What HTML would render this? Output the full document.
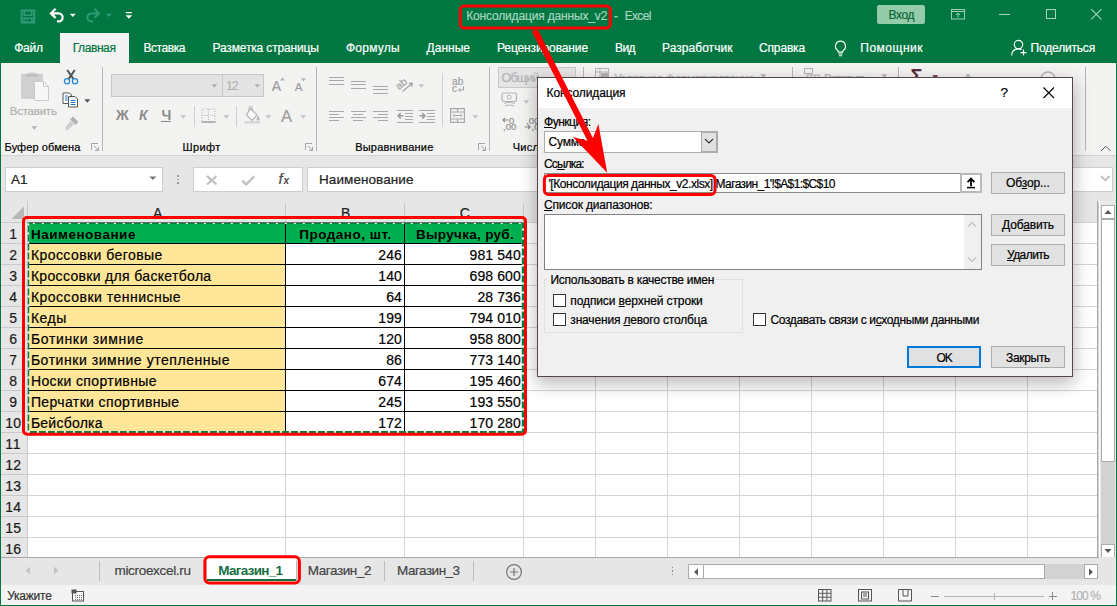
<!DOCTYPE html>
<html lang="ru"><head><meta charset="utf-8"><title>Excel</title>
<style>
html,body{margin:0;padding:0}
body{width:1117px;height:606px;position:relative;overflow:hidden;background:#007641;font-family:"Liberation Sans",sans-serif}
.b{position:absolute;display:block}
.t{position:absolute;white-space:pre;line-height:1;font-family:"Liberation Sans",sans-serif;-webkit-text-stroke:0.2px currentColor}
.t u{text-decoration:underline;text-underline-offset:1px}
</style></head>
<body>
<!-- title bar and ribbon tabs -->
<div class="b" style="left:0px;top:0px;width:1117px;height:63px;background:#007641;"></div>
<div class="b" style="left:60px;top:33px;width:69px;height:31px;background:#f3f3f3;"></div>
<svg class="b" style="left:20px;top:9px;" width="16" height="15" viewBox="0 0 16 15"><path d="M1.6 1.6h12.6v11.8H1.6z" fill="none" stroke="#2f9a76" stroke-width="2"/><path d="M4.2 1.6v4.6h7.4V1.6" fill="none" stroke="#2f9a76" stroke-width="1.6"/><path d="M4 13.4V9.4h8v4M7 13.4v-2.2" fill="none" stroke="#2f9a76" stroke-width="1.6"/></svg>
<svg class="b" style="left:48px;top:7px;" width="18" height="16" viewBox="0 0 18 16"><path d="M3.4 6.4H10.6a4 4 0 0 1 0 8H9" fill="none" stroke="#fff" stroke-width="2.3"/><path d="M7.6 1.8L3 6.4L7.6 10.8" fill="none" stroke="#fff" stroke-width="2.3"/></svg>
<svg class="b" style="left:69px;top:13px;" width="8" height="5" viewBox="0 0 8 5"><path d="M0.8 0.8h6l-3 3.2z" fill="#fff"/></svg>
<svg class="b" style="left:84px;top:7px;" width="18" height="16" viewBox="0 0 18 16"><path d="M14.6 6.4H7.4a4 4 0 0 0 0 8H9" fill="none" stroke="#2f9a76" stroke-width="2"/><path d="M10.4 1.8L15 6.4L10.4 10.8" fill="none" stroke="#2f9a76" stroke-width="2"/></svg>
<svg class="b" style="left:105px;top:13px;" width="8" height="5" viewBox="0 0 8 5"><path d="M0.8 0.8h6l-3 3.2z" fill="#2f9a76"/></svg>
<svg class="b" style="left:125px;top:11px;" width="8" height="9" viewBox="0 0 8 9"><rect x="0.8" y="1" width="6" height="1.3" fill="#fff"/><path d="M0.6 4.3h6.6l-3.3 3.4z" fill="#fff"/></svg>
<span class="t" style="left:466.20px;top:10px;font-size:12px;color:#a9d5bf;letter-spacing:-0.161px;">Консолидация данных_v2</span>
<span class="t" style="left:614.00px;top:10px;font-size:12px;color:#a9d5bf;">-</span>
<span class="t" style="left:624.70px;top:10px;font-size:12px;color:#a9d5bf;letter-spacing:-0.669px;">Excel</span>
<div class="b" style="left:877px;top:5px;width:48px;height:19px;background:#93cbab;border-radius:2px;"></div>
<span class="t" style="left:888.60px;top:9px;font-size:12px;color:#0b6638;letter-spacing:-0.389px;">Вход</span>
<svg class="b" style="left:950px;top:8px;" width="16" height="12" viewBox="0 0 16 12"><rect x="1.5" y="1.5" width="13" height="9.5" fill="none" stroke="#9ccfb5" stroke-width="1"/><path d="M1.5 3.5h13" stroke="#9ccfb5"/><path d="M8 9.5V5.2M6 7L8 5l2 2" fill="none" stroke="#9ccfb5" stroke-width="1"/></svg>
<div class="b" style="left:999px;top:14px;width:10.5px;height:1px;background:#a8d4be;"></div>
<div class="b" style="left:1045.5px;top:9px;width:10px;height:10px;border:1px solid #a8d4be;box-sizing:border-box;"></div>
<svg class="b" style="left:1090px;top:8px;" width="13" height="13" viewBox="0 0 13 13"><path d="M1.2 1.2L11.4 11.4M11.4 1.2L1.2 11.4" stroke="#a8d4be" stroke-width="1.1" fill="none"/></svg>
<span class="t" style="left:14.30px;top:42px;font-size:12px;color:#fff;letter-spacing:-0.304px;">Файл</span>
<span class="t" style="left:72.70px;top:42px;font-size:12px;color:#007641;letter-spacing:-0.413px;">Главная</span>
<span class="t" style="left:143.40px;top:42px;font-size:12px;color:#fff;letter-spacing:-0.430px;">Вставка</span>
<span class="t" style="left:212.50px;top:42px;font-size:12px;color:#fff;letter-spacing:-0.151px;">Разметка страницы</span>
<span class="t" style="left:346.00px;top:42px;font-size:12px;color:#fff;letter-spacing:0.226px;">Формулы</span>
<span class="t" style="left:426.60px;top:42px;font-size:12px;color:#fff;letter-spacing:0.007px;">Данные</span>
<span class="t" style="left:497.00px;top:42px;font-size:12px;color:#fff;letter-spacing:-0.119px;">Рецензирование</span>
<span class="t" style="left:615.00px;top:42px;font-size:12px;color:#fff;letter-spacing:-0.573px;">Вид</span>
<span class="t" style="left:662.00px;top:42px;font-size:12px;color:#fff;letter-spacing:0.047px;">Разработчик</span>
<span class="t" style="left:759.00px;top:42px;font-size:12px;color:#fff;letter-spacing:-0.154px;">Справка</span>
<span class="t" style="left:860.30px;top:42px;font-size:12px;color:#fff;letter-spacing:0.502px;">Помощник</span>
<span class="t" style="left:1030.60px;top:42px;font-size:12px;color:#fff;letter-spacing:-0.187px;">Поделиться</span>
<svg class="b" style="left:833px;top:40px;" width="15" height="17" viewBox="0 0 15 17"><path d="M7.5 1.2a5 5 0 0 0-3 9c.7.6 1 1.2 1 2h4c0-.8.3-1.4 1-2a5 5 0 0 0-3-9z" fill="none" stroke="#fff" stroke-width="1.2"/><path d="M5.5 14h4M6 15.8h3" stroke="#fff" stroke-width="1.1"/></svg>
<svg class="b" style="left:1010px;top:39px;" width="18" height="18" viewBox="0 0 18 18"><circle cx="8.5" cy="5.6" r="4.2" fill="none" stroke="#fff" stroke-width="1.2"/><path d="M1.6 16.5c.2-4 2.6-6.6 6.9-6.6 1.3 0 2.3.3 3.2.8" fill="none" stroke="#fff" stroke-width="1.2"/><path d="M13.5 10.6v6M10.5 13.6h6" stroke="#fff" stroke-width="1.2"/></svg>
<!-- ribbon and formula bar -->
<div class="b" style="left:1px;top:63px;width:1115px;height:92px;background:#f3f3f2;"></div>
<div class="b" style="left:1px;top:155px;width:1115px;height:1px;background:#d2d2d2;"></div>
<div class="b" style="left:1px;top:156px;width:1115px;height:45px;background:#e6e6e6;"></div>
<svg class="b" style="left:20px;top:69px;" width="31" height="33" viewBox="0 0 31 33"><rect x="1" y="5" width="22" height="25" fill="#d0d0d0"/><path d="M6 8V4.5h3.5a2.6 2.6 0 0 1 5 0H18V8z" fill="#c2c2c2"/><circle cx="12" cy="3.6" r="1" fill="#f3f3f3"/><path d="M14.5 12.5h9l5 5v14h-14z" fill="#f7f7f7" stroke="#c9c9c9" stroke-width="1"/><path d="M23.5 12.5v5h5" fill="none" stroke="#c9c9c9"/></svg>
<span class="t" style="left:9.70px;top:106px;font-size:11.5px;color:#b0b0b0;letter-spacing:-0.219px;">Вставить</span>
<svg class="b" style="left:30.5px;top:126px;" width="7" height="4.4" viewBox="0 0 7 4.4"><path d="M0.3 0.3h6l-3.0 3.4z" fill="#b3b3b3"/></svg>
<svg class="b" style="left:63px;top:69px;" width="16" height="16" viewBox="0 0 16 16"><path d="M4.2 1L10.4 9.8M11.8 1L5.6 9.8" stroke="#555" stroke-width="2" fill="none"/><circle cx="4" cy="12.2" r="2.6" fill="none" stroke="#1b86d8" stroke-width="1.2"/><circle cx="12" cy="12.2" r="2.6" fill="none" stroke="#1b86d8" stroke-width="1.2"/></svg>
<svg class="b" style="left:62px;top:92px;" width="17" height="16" viewBox="0 0 17 16"><path d="M1 1h6.5l2 2v8.5h-8.5z" fill="#fff" stroke="#555" stroke-width="1"/><path d="M6.5 4.5h6.5l2.5 2.5v8h-9z" fill="#fff" stroke="#555" stroke-width="1"/><path d="M8.5 8.5h5M8.5 10.5h5M8.5 12.5h5" stroke="#1e73c8" stroke-width="1"/><path d="M3 4h2.5M3 6h2.5M3 8h2.5" stroke="#1e73c8" stroke-width="1"/></svg>
<svg class="b" style="left:84px;top:99px;" width="7" height="4.4" viewBox="0 0 7 4.4"><path d="M0.3 0.3h6l-3.0 3.4z" fill="#555"/></svg>
<svg class="b" style="left:64px;top:115px;" width="16" height="16" viewBox="0 0 16 16"><path d="M9 1.5l5.5 5.5-3 3L6 4.5z" fill="#b3b3b3"/><path d="M6.5 6L10 9.5 4 15H1.5V12z" fill="#cfcfcf"/></svg>
<span class="t" style="left:4.60px;top:142px;font-size:11px;color:#000;letter-spacing:0.087px;">Буфер обмена</span>
<svg class="b" style="left:91px;top:143px;" width="9" height="9" viewBox="0 0 9 9"><path d="M0.5 7V0.5H7" fill="none" stroke="#a6a6a6" stroke-width="1"/><path d="M3 3l4.5 4.5M7.5 4v3.5H4" fill="none" stroke="#a6a6a6" stroke-width="1"/></svg>
<div class="b" style="left:102px;top:67px;width:1px;height:84px;background:#b6b6b6;"></div>
<div class="b" style="left:111px;top:74px;width:153px;height:23px;background:#e4e4e4;border:1px solid #c8c8c8;box-sizing:border-box;"></div>
<div class="b" style="left:221.5px;top:74px;width:1px;height:23px;background:#c8c8c8;"></div>
<svg class="b" style="left:211px;top:84px;" width="7" height="4.4" viewBox="0 0 7 4.4"><path d="M0.3 0.3h6l-3.0 3.4z" fill="#b3b3b3"/></svg>
<span class="t" style="left:226.00px;top:80px;font-size:12.5px;color:#b3b3b3;letter-spacing:-1.203px;">12</span>
<svg class="b" style="left:254px;top:84px;" width="7" height="4.4" viewBox="0 0 7 4.4"><path d="M0.3 0.3h6l-3.0 3.4z" fill="#b3b3b3"/></svg>
<span class="t" style="left:271.80px;top:79px;font-size:14px;color:#9c9c9c;">A</span>
<svg class="b" style="left:280px;top:77px;" width="6" height="4" viewBox="0 0 6 4"><path d="M0 3.4l2.5-3.2 2.5 3.2z" fill="#b3b3b3"/></svg>
<span class="t" style="left:294.70px;top:82px;font-size:11.5px;color:#9c9c9c;">A</span>
<svg class="b" style="left:301px;top:78px;" width="6" height="4" viewBox="0 0 6 4"><path d="M0 0.2h5l-2.5 3.2z" fill="#b3b3b3"/></svg>
<span class="t" style="left:116.00px;top:108px;font-size:14px;color:#8c8c8c;font-weight:bold;-webkit-text-stroke:0;">Ж</span>
<span class="t" style="left:139.00px;top:108px;font-size:14px;color:#8c8c8c;font-weight:bold;-webkit-text-stroke:0;font-style:italic;">К</span>
<span class="t" style="left:161.40px;top:108px;font-size:14px;color:#8c8c8c;font-weight:bold;-webkit-text-stroke:0;">Ч</span>
<div class="b" style="left:161px;top:121px;width:10px;height:1.4px;background:#8c8c8c;"></div>
<svg class="b" style="left:179.5px;top:115px;" width="7" height="4.4" viewBox="0 0 7 4.4"><path d="M0.3 0.3h6l-3.0 3.4z" fill="#c4c4c4"/></svg>
<div class="b" style="left:193.5px;top:106px;width:1px;height:21px;background:#cfcfcf;"></div>
<svg class="b" style="left:201px;top:108px;" width="15" height="15" viewBox="0 0 15 15"><rect x="1" y="1" width="13" height="13" fill="none" stroke="#b3b3b3" stroke-dasharray="1 1.5"/><path d="M7.5 1v13M1 7.5h13" stroke="#b3b3b3" stroke-dasharray="1 1.5"/><path d="M0.5 14h14" stroke="#a8a8a8" stroke-width="1.6"/></svg>
<svg class="b" style="left:222.5px;top:115px;" width="7" height="4.4" viewBox="0 0 7 4.4"><path d="M0.3 0.3h6l-3.0 3.4z" fill="#c4c4c4"/></svg>
<div class="b" style="left:236px;top:106px;width:1px;height:21px;background:#cfcfcf;"></div>
<svg class="b" style="left:244px;top:106px;" width="17" height="18" viewBox="0 0 17 18"><path d="M6.5 2.5L13 9l-5 5.5L2.5 9z" fill="#fafafa" stroke="#b3b3b3" stroke-width="1.2"/><path d="M5 5V2a1.6 1.6 0 0 1 3.2 0v3" fill="none" stroke="#b3b3b3"/><path d="M14 9.5c1 1.6 1.6 2.6 1.6 3.4a1.5 1.5 0 0 1-3 0c0-.8.6-1.8 1.4-3.4z" fill="#b3b3b3"/><rect x="0.5" y="15" width="15.5" height="2.6" fill="#d8d8d8"/></svg>
<svg class="b" style="left:265px;top:115px;" width="7" height="4.4" viewBox="0 0 7 4.4"><path d="M0.3 0.3h6l-3.0 3.4z" fill="#c4c4c4"/></svg>
<span class="t" style="left:281.00px;top:108px;font-size:16.5px;color:#9c9c9c;">A</span>
<svg class="b" style="left:299.5px;top:115px;" width="7" height="4.4" viewBox="0 0 7 4.4"><path d="M0.3 0.3h6l-3.0 3.4z" fill="#c4c4c4"/></svg>
<span class="t" style="left:182.40px;top:142px;font-size:11px;color:#000;letter-spacing:0.439px;">Шрифт</span>
<svg class="b" style="left:305px;top:143px;" width="9" height="9" viewBox="0 0 9 9"><path d="M0.5 7V0.5H7" fill="none" stroke="#a6a6a6" stroke-width="1"/><path d="M3 3l4.5 4.5M7.5 4v3.5H4" fill="none" stroke="#a6a6a6" stroke-width="1"/></svg>
<div class="b" style="left:316px;top:67px;width:1px;height:84px;background:#b6b6b6;"></div>
<div class="b" style="left:329.0px;top:77.0px;width:14.5px;height:1.2px;background:#a9a9a9;"></div>
<div class="b" style="left:329.0px;top:80.3px;width:14.5px;height:1.2px;background:#a9a9a9;"></div>
<div class="b" style="left:329.0px;top:83.6px;width:14.5px;height:1.2px;background:#a9a9a9;"></div>
<div class="b" style="left:351.0px;top:81.0px;width:14.5px;height:1.2px;background:#a9a9a9;"></div>
<div class="b" style="left:351.0px;top:84.3px;width:14.5px;height:1.2px;background:#a9a9a9;"></div>
<div class="b" style="left:351.0px;top:87.6px;width:14.5px;height:1.2px;background:#a9a9a9;"></div>
<div class="b" style="left:373.0px;top:86.0px;width:14.5px;height:1.2px;background:#a9a9a9;"></div>
<div class="b" style="left:373.0px;top:89.3px;width:14.5px;height:1.2px;background:#a9a9a9;"></div>
<div class="b" style="left:373.0px;top:92.6px;width:14.5px;height:1.2px;background:#a9a9a9;"></div>
<div class="b" style="left:329px;top:111.0px;width:14.5px;height:1.2px;background:#a9a9a9;"></div>
<div class="b" style="left:329px;top:114.1px;width:10px;height:1.2px;background:#a9a9a9;"></div>
<div class="b" style="left:329px;top:117.2px;width:14.5px;height:1.2px;background:#a9a9a9;"></div>
<div class="b" style="left:329px;top:120.3px;width:10px;height:1.2px;background:#a9a9a9;"></div>
<div class="b" style="left:351.0px;top:111.0px;width:14.5px;height:1.2px;background:#a9a9a9;"></div>
<div class="b" style="left:353.2px;top:114.1px;width:10px;height:1.2px;background:#a9a9a9;"></div>
<div class="b" style="left:351.0px;top:117.2px;width:14.5px;height:1.2px;background:#a9a9a9;"></div>
<div class="b" style="left:353.2px;top:120.3px;width:10px;height:1.2px;background:#a9a9a9;"></div>
<div class="b" style="left:373.0px;top:111.0px;width:14.5px;height:1.2px;background:#a9a9a9;"></div>
<div class="b" style="left:377.5px;top:114.1px;width:10px;height:1.2px;background:#a9a9a9;"></div>
<div class="b" style="left:373.0px;top:117.2px;width:14.5px;height:1.2px;background:#a9a9a9;"></div>
<div class="b" style="left:377.5px;top:120.3px;width:10px;height:1.2px;background:#a9a9a9;"></div>
<span class="t" style="left:399.50px;top:81px;font-size:10.5px;color:#a3a3a3;transform:rotate(-40deg);transform-origin:left bottom;">ab</span>
<svg class="b" style="left:399px;top:80px;" width="16" height="12" viewBox="0 0 16 12"><path d="M3.5 11.5L13.5 3M13.5 3l-3.6 .4M13.5 3l-.8 3.6" stroke="#a3a3a3" stroke-width="1.2" fill="none"/></svg>
<svg class="b" style="left:417.5px;top:84px;" width="7" height="4.4" viewBox="0 0 7 4.4"><path d="M0.3 0.3h6l-3.0 3.4z" fill="#c4c4c4"/></svg>
<div class="b" style="left:397px;top:109.5px;width:16px;height:1.2px;background:#a9a9a9;"></div>
<div class="b" style="left:397px;top:121.5px;width:16px;height:1.2px;background:#a9a9a9;"></div>
<div class="b" style="left:404.5px;top:112.5px;width:8.5px;height:1.2px;background:#a9a9a9;"></div>
<div class="b" style="left:404.5px;top:115.5px;width:8.5px;height:1.2px;background:#a9a9a9;"></div>
<div class="b" style="left:404.5px;top:118.5px;width:8.5px;height:1.2px;background:#a9a9a9;"></div>
<svg class="b" style="left:397px;top:112px;" width="8" height="8" viewBox="0 0 8 8"><path d="M6.5 3.8H1.2M3.8 1L1 3.8 3.8 6.6" stroke="#9c9c9c" stroke-width="1.5" fill="none"/></svg>
<div class="b" style="left:419px;top:109.5px;width:16px;height:1.2px;background:#a9a9a9;"></div>
<div class="b" style="left:419px;top:121.5px;width:16px;height:1.2px;background:#a9a9a9;"></div>
<div class="b" style="left:426.5px;top:112.5px;width:8.5px;height:1.2px;background:#a9a9a9;"></div>
<div class="b" style="left:426.5px;top:115.5px;width:8.5px;height:1.2px;background:#a9a9a9;"></div>
<div class="b" style="left:426.5px;top:118.5px;width:8.5px;height:1.2px;background:#a9a9a9;"></div>
<svg class="b" style="left:419px;top:112px;" width="8" height="8" viewBox="0 0 8 8"><path d="M0.5 3.8H5.8M3.2 1L6 3.8 3.2 6.6" stroke="#9c9c9c" stroke-width="1.5" fill="none"/></svg>
<div class="b" style="left:442px;top:73px;width:1px;height:54px;background:#cfcfcf;"></div>
<span class="t" style="left:452.00px;top:77px;font-size:10px;color:#9c9c9c;letter-spacing:0.188px;">ab</span>
<span class="t" style="left:452.00px;top:84px;font-size:10px;color:#9c9c9c;">c</span>
<svg class="b" style="left:457px;top:86px;" width="8" height="7" viewBox="0 0 8 7"><path d="M6.5 0.5v3.5H1.5M3.3 2.2L1.5 4l1.8 1.8" stroke="#9c9c9c" stroke-width="1" fill="none"/></svg>
<svg class="b" style="left:450px;top:108px;" width="15" height="15" viewBox="0 0 15 15"><rect x="0.6" y="0.6" width="13.8" height="13.8" fill="none" stroke="#a9a9a9" stroke-width="1.2"/><path d="M0.6 4h13.8M0.6 11h13.8M7.5 0.6V4M7.5 11v3.4" stroke="#a9a9a9" stroke-width="1.2"/><path d="M3 7.5h9M4.6 6L3 7.5 4.6 9M10.4 6L12 7.5 10.4 9" stroke="#a9a9a9" stroke-width="1" fill="none"/></svg>
<svg class="b" style="left:471.5px;top:115px;" width="7" height="4.4" viewBox="0 0 7 4.4"><path d="M0.3 0.3h6l-3.0 3.4z" fill="#c4c4c4"/></svg>
<span class="t" style="left:355.20px;top:142px;font-size:11px;color:#000;letter-spacing:0.215px;">Выравнивание</span>
<svg class="b" style="left:478px;top:143px;" width="9" height="9" viewBox="0 0 9 9"><path d="M0.5 7V0.5H7" fill="none" stroke="#a6a6a6" stroke-width="1"/><path d="M3 3l4.5 4.5M7.5 4v3.5H4" fill="none" stroke="#a6a6a6" stroke-width="1"/></svg>
<div class="b" style="left:489px;top:67px;width:1px;height:84px;background:#b6b6b6;"></div>
<div class="b" style="left:498px;top:67px;width:78px;height:21px;background:#e4e4e4;border:1px solid #c8c8c8;box-sizing:border-box;"></div>
<span class="t" style="left:501.60px;top:72px;font-size:12.5px;color:#b3b3b3;letter-spacing:-0.828px;">Общий</span>
<svg class="b" style="left:501px;top:92px;" width="17" height="15" viewBox="0 0 17 15"><rect x="1" y="1" width="14.5" height="8.5" rx="1.5" fill="none" stroke="#b3b3b3" stroke-width="1.2"/><circle cx="8.2" cy="5.2" r="2" fill="none" stroke="#b3b3b3"/><path d="M3 11.5c3-1.4 7-1.4 11 0M4 14c3-1.2 6-1.2 9 0" stroke="#b3b3b3" fill="none"/></svg>
<svg class="b" style="left:522.5px;top:100px;" width="7" height="4.4" viewBox="0 0 7 4.4"><path d="M0.3 0.3h6l-3.0 3.4z" fill="#c4c4c4"/></svg>
<span class="t" style="left:509.00px;top:116px;font-size:9.5px;color:#8f8f8f;">0</span>
<span class="t" style="left:503.00px;top:122px;font-size:9.5px;color:#8f8f8f;">,00</span>
<svg class="b" style="left:501.5px;top:116.5px;" width="7" height="6" viewBox="0 0 7 6"><path d="M6.5 3H1M3 1L1 3l2 2" stroke="#8f8f8f" stroke-width="1.2" fill="none"/></svg>
<span class="t" style="left:526.00px;top:116px;font-size:9.5px;color:#8f8f8f;">,00</span>
<span class="t" style="left:531.50px;top:122px;font-size:9.5px;color:#8f8f8f;">,0</span>
<svg class="b" style="left:523.5px;top:123.5px;" width="7" height="6" viewBox="0 0 7 6"><path d="M0.5 3H6M4 1l2 2-2 2" stroke="#8f8f8f" stroke-width="1.2" fill="none"/></svg>
<span class="t" style="left:512.70px;top:142px;font-size:11px;color:#000;letter-spacing:0.272px;">Число</span>
<div class="b" style="left:583px;top:67px;width:1px;height:84px;background:#b6b6b6;"></div>
<svg class="b" style="left:595px;top:68px;" width="15" height="12" viewBox="0 0 15 12"><rect x="0.5" y="0.5" width="13" height="10" fill="none" stroke="#b3b3b3"/><path d="M0.5 4h13M5 0.5v10" stroke="#b3b3b3"/><rect x="6" y="5" width="8" height="6" fill="#b3b3b3"/></svg>
<span class="t" style="left:614.00px;top:73px;font-size:12px;color:#b3b3b3;letter-spacing:-0.551px;">Условное форматирование</span>
<svg class="b" style="left:760px;top:74px;" width="7" height="4.4" viewBox="0 0 7 4.4"><path d="M0.3 0.3h6l-3.0 3.4z" fill="#b3b3b3"/></svg>
<div class="b" style="left:792px;top:67px;width:1px;height:84px;background:#b6b6b6;"></div>
<svg class="b" style="left:804px;top:68px;" width="16" height="12" viewBox="0 0 16 12"><rect x="0.5" y="0.5" width="8" height="5" fill="none" stroke="#b3b3b3"/><rect x="3" y="7" width="12" height="5" fill="none" stroke="#b3b3b3"/><path d="M7 7v5M11 7v5" stroke="#b3b3b3"/></svg>
<span class="t" style="left:824.00px;top:73px;font-size:12px;color:#b3b3b3;letter-spacing:-0.984px;">Вставить</span>
<svg class="b" style="left:881px;top:74px;" width="7" height="4.4" viewBox="0 0 7 4.4"><path d="M0.3 0.3h6l-3.0 3.4z" fill="#b3b3b3"/></svg>
<div class="b" style="left:898px;top:67px;width:1px;height:84px;background:#b6b6b6;"></div>
<span class="t" style="left:910.50px;top:66px;font-size:20px;color:#5c2c3c;font-weight:bold;-webkit-text-stroke:0;">Σ</span>
<svg class="b" style="left:931.5px;top:75px;" width="7" height="4.4" viewBox="0 0 7 4.4"><path d="M0.3 0.3h6l-3.0 3.4z" fill="#5c2c3c"/></svg>
<span class="t" style="left:963.00px;top:71px;font-size:15px;color:#b3b3b3;">A</span>
<svg class="b" style="left:1039px;top:70px;" width="18" height="18" viewBox="0 0 18 18"><circle cx="9" cy="9" r="7" fill="none" stroke="#b3b3b3" stroke-width="1.4"/></svg>
<div class="b" style="left:1085px;top:67px;width:1px;height:84px;background:#b6b6b6;"></div>
<svg class="b" style="left:1100px;top:145px;" width="12" height="7" viewBox="0 0 12 7"><path d="M1 6L5.8 1.2L10.6 6" fill="none" stroke="#555" stroke-width="1"/></svg>
<div class="b" style="left:5px;top:167px;width:158px;height:25px;background:#fff;border:1px solid #cdcdcd;box-sizing:border-box;"></div>
<span class="t" style="left:11.00px;top:173px;font-size:13.5px;color:#222;letter-spacing:-0.108px;">A1</span>
<svg class="b" style="left:149px;top:176px;" width="8" height="5" viewBox="0 0 8 5"><path d="M0.3 0.5h7l-3.5 3.6z" fill="#777"/></svg>
<div class="b" style="left:177px;top:175px;width:1.6px;height:1.6px;background:#9a9a9a;"></div>
<div class="b" style="left:177px;top:178.5px;width:1.6px;height:1.6px;background:#9a9a9a;"></div>
<div class="b" style="left:177px;top:182px;width:1.6px;height:1.6px;background:#9a9a9a;"></div>
<div class="b" style="left:193px;top:167px;width:110px;height:25px;background:#fff;border:1px solid #cdcdcd;box-sizing:border-box;"></div>
<svg class="b" style="left:206px;top:174.5px;" width="12" height="11" viewBox="0 0 12 11"><path d="M1 1l9.5 8.5M10.5 1L1 9.5" stroke="#bdbdbd" stroke-width="2" fill="none"/></svg>
<svg class="b" style="left:241px;top:174.5px;" width="15" height="11" viewBox="0 0 15 11"><path d="M1.2 5.6l4 3.8L13.4 1.2" stroke="#c2c2c2" stroke-width="2.4" fill="none"/></svg>
<span class="t" style="left:278.50px;top:171px;font-size:15px;color:#4a4a4a;font-style:italic;font-family:"Liberation Serif",serif;">f</span>
<span class="t" style="left:283.50px;top:176px;font-size:10px;color:#4a4a4a;font-weight:bold;-webkit-text-stroke:0;font-style:italic;font-family:"Liberation Serif",serif;">x</span>
<div class="b" style="left:307px;top:167px;width:806px;height:25px;background:#fff;border:1px solid #cdcdcd;box-sizing:border-box;"></div>
<span class="t" style="left:319.00px;top:173px;font-size:13.5px;color:#222;letter-spacing:0.076px;">Наименование</span>
<svg class="b" style="left:1100px;top:175px;" width="11" height="7" viewBox="0 0 11 7"><path d="M1 1l4.3 4.3L9.6 1" fill="none" stroke="#bdbdbd" stroke-width="1.8"/></svg>
<!-- worksheet grid -->
<div class="b" style="left:1px;top:201px;width:1115px;height:356px;background:#fff;"></div>
<div class="b" style="left:1px;top:201px;width:1098px;height:21px;background:#e6e6e6;"></div>
<div class="b" style="left:1px;top:222px;width:27px;height:336px;background:#e6e6e6;"></div>
<svg class="b" style="left:11px;top:206px;" width="14" height="14" viewBox="0 0 14 14"><path d="M13 0.5V13H0.5z" fill="#b7b7b7"/></svg>
<div class="b" style="left:285px;top:222px;width:1px;height:336px;background:#d4d4d4;"></div>
<div class="b" style="left:404px;top:222px;width:1px;height:336px;background:#d4d4d4;"></div>
<div class="b" style="left:523px;top:222px;width:1px;height:336px;background:#d4d4d4;"></div>
<div class="b" style="left:595px;top:222px;width:1px;height:336px;background:#d4d4d4;"></div>
<div class="b" style="left:667px;top:222px;width:1px;height:336px;background:#d4d4d4;"></div>
<div class="b" style="left:739px;top:222px;width:1px;height:336px;background:#d4d4d4;"></div>
<div class="b" style="left:811px;top:222px;width:1px;height:336px;background:#d4d4d4;"></div>
<div class="b" style="left:883px;top:222px;width:1px;height:336px;background:#d4d4d4;"></div>
<div class="b" style="left:955px;top:222px;width:1px;height:336px;background:#d4d4d4;"></div>
<div class="b" style="left:1027px;top:222px;width:1px;height:336px;background:#d4d4d4;"></div>
<div class="b" style="left:1098px;top:222px;width:1px;height:336px;background:#d4d4d4;"></div>
<div class="b" style="left:27px;top:201px;width:1px;height:357px;background:#c9c9c9;"></div>
<div class="b" style="left:285px;top:203px;width:1px;height:19px;background:#c9c9c9;"></div>
<div class="b" style="left:404px;top:203px;width:1px;height:19px;background:#c9c9c9;"></div>
<div class="b" style="left:523px;top:203px;width:1px;height:19px;background:#c9c9c9;"></div>
<div class="b" style="left:595px;top:203px;width:1px;height:19px;background:#c9c9c9;"></div>
<div class="b" style="left:667px;top:203px;width:1px;height:19px;background:#c9c9c9;"></div>
<div class="b" style="left:739px;top:203px;width:1px;height:19px;background:#c9c9c9;"></div>
<div class="b" style="left:811px;top:203px;width:1px;height:19px;background:#c9c9c9;"></div>
<div class="b" style="left:883px;top:203px;width:1px;height:19px;background:#c9c9c9;"></div>
<div class="b" style="left:955px;top:203px;width:1px;height:19px;background:#c9c9c9;"></div>
<div class="b" style="left:1027px;top:203px;width:1px;height:19px;background:#c9c9c9;"></div>
<div class="b" style="left:1098px;top:203px;width:1px;height:19px;background:#c9c9c9;"></div>
<div class="b" style="left:28px;top:222px;width:1071px;height:1px;background:#d4d4d4;"></div>
<div class="b" style="left:1px;top:222px;width:27px;height:1px;background:#c9c9c9;"></div>
<div class="b" style="left:28px;top:243px;width:1071px;height:1px;background:#d4d4d4;"></div>
<div class="b" style="left:1px;top:243px;width:27px;height:1px;background:#c9c9c9;"></div>
<div class="b" style="left:28px;top:264px;width:1071px;height:1px;background:#d4d4d4;"></div>
<div class="b" style="left:1px;top:264px;width:27px;height:1px;background:#c9c9c9;"></div>
<div class="b" style="left:28px;top:285px;width:1071px;height:1px;background:#d4d4d4;"></div>
<div class="b" style="left:1px;top:285px;width:27px;height:1px;background:#c9c9c9;"></div>
<div class="b" style="left:28px;top:306px;width:1071px;height:1px;background:#d4d4d4;"></div>
<div class="b" style="left:1px;top:306px;width:27px;height:1px;background:#c9c9c9;"></div>
<div class="b" style="left:28px;top:327px;width:1071px;height:1px;background:#d4d4d4;"></div>
<div class="b" style="left:1px;top:327px;width:27px;height:1px;background:#c9c9c9;"></div>
<div class="b" style="left:28px;top:348px;width:1071px;height:1px;background:#d4d4d4;"></div>
<div class="b" style="left:1px;top:348px;width:27px;height:1px;background:#c9c9c9;"></div>
<div class="b" style="left:28px;top:369px;width:1071px;height:1px;background:#d4d4d4;"></div>
<div class="b" style="left:1px;top:369px;width:27px;height:1px;background:#c9c9c9;"></div>
<div class="b" style="left:28px;top:390px;width:1071px;height:1px;background:#d4d4d4;"></div>
<div class="b" style="left:1px;top:390px;width:27px;height:1px;background:#c9c9c9;"></div>
<div class="b" style="left:28px;top:411px;width:1071px;height:1px;background:#d4d4d4;"></div>
<div class="b" style="left:1px;top:411px;width:27px;height:1px;background:#c9c9c9;"></div>
<div class="b" style="left:28px;top:432px;width:1071px;height:1px;background:#d4d4d4;"></div>
<div class="b" style="left:1px;top:432px;width:27px;height:1px;background:#c9c9c9;"></div>
<div class="b" style="left:28px;top:453px;width:1071px;height:1px;background:#d4d4d4;"></div>
<div class="b" style="left:1px;top:453px;width:27px;height:1px;background:#c9c9c9;"></div>
<div class="b" style="left:28px;top:474px;width:1071px;height:1px;background:#d4d4d4;"></div>
<div class="b" style="left:1px;top:474px;width:27px;height:1px;background:#c9c9c9;"></div>
<div class="b" style="left:28px;top:495px;width:1071px;height:1px;background:#d4d4d4;"></div>
<div class="b" style="left:1px;top:495px;width:27px;height:1px;background:#c9c9c9;"></div>
<div class="b" style="left:28px;top:516px;width:1071px;height:1px;background:#d4d4d4;"></div>
<div class="b" style="left:1px;top:516px;width:27px;height:1px;background:#c9c9c9;"></div>
<div class="b" style="left:28px;top:537px;width:1071px;height:1px;background:#d4d4d4;"></div>
<div class="b" style="left:1px;top:537px;width:27px;height:1px;background:#c9c9c9;"></div>
<div class="b" style="left:28px;top:558px;width:1071px;height:1px;background:#d4d4d4;"></div>
<div class="b" style="left:1px;top:558px;width:27px;height:1px;background:#c9c9c9;"></div>
<span class="t" style="left:153.03px;top:206px;font-size:14px;color:#222;">A</span>
<span class="t" style="left:341.03px;top:206px;font-size:14px;color:#222;">B</span>
<span class="t" style="left:459.64px;top:206px;font-size:14px;color:#222;">C</span>
<span class="t" style="left:9.30px;top:227px;font-size:14px;color:#1a1a1a;">1</span>
<span class="t" style="left:9.30px;top:248px;font-size:14px;color:#1a1a1a;">2</span>
<span class="t" style="left:9.30px;top:269px;font-size:14px;color:#1a1a1a;">3</span>
<span class="t" style="left:9.30px;top:290px;font-size:14px;color:#1a1a1a;">4</span>
<span class="t" style="left:9.30px;top:311px;font-size:14px;color:#1a1a1a;">5</span>
<span class="t" style="left:9.30px;top:332px;font-size:14px;color:#1a1a1a;">6</span>
<span class="t" style="left:9.30px;top:353px;font-size:14px;color:#1a1a1a;">7</span>
<span class="t" style="left:9.30px;top:374px;font-size:14px;color:#1a1a1a;">8</span>
<span class="t" style="left:9.30px;top:395px;font-size:14px;color:#1a1a1a;">9</span>
<span class="t" style="left:5.20px;top:416px;font-size:14px;color:#1a1a1a;letter-spacing:0.211px;">10</span>
<span class="t" style="left:5.20px;top:437px;font-size:14px;color:#1a1a1a;letter-spacing:0.727px;">11</span>
<span class="t" style="left:5.20px;top:458px;font-size:14px;color:#1a1a1a;letter-spacing:0.211px;">12</span>
<span class="t" style="left:5.20px;top:479px;font-size:14px;color:#1a1a1a;letter-spacing:0.211px;">13</span>
<span class="t" style="left:5.20px;top:500px;font-size:14px;color:#1a1a1a;letter-spacing:0.211px;">14</span>
<span class="t" style="left:5.20px;top:521px;font-size:14px;color:#1a1a1a;letter-spacing:0.211px;">15</span>
<span class="t" style="left:5.20px;top:542px;font-size:14px;color:#1a1a1a;letter-spacing:0.211px;">16</span>
<div class="b" style="left:28px;top:222px;width:496px;height:22px;background:#00b050;"></div>
<div class="b" style="left:28px;top:243px;width:258px;height:190px;background:#ffe699;"></div>
<div class="b" style="left:28px;top:222px;width:496px;height:1px;background:#000;"></div>
<div class="b" style="left:28px;top:243px;width:496px;height:1px;background:#000;"></div>
<div class="b" style="left:28px;top:264px;width:496px;height:1px;background:#000;"></div>
<div class="b" style="left:28px;top:285px;width:496px;height:1px;background:#000;"></div>
<div class="b" style="left:28px;top:306px;width:496px;height:1px;background:#000;"></div>
<div class="b" style="left:28px;top:327px;width:496px;height:1px;background:#000;"></div>
<div class="b" style="left:28px;top:348px;width:496px;height:1px;background:#000;"></div>
<div class="b" style="left:28px;top:369px;width:496px;height:1px;background:#000;"></div>
<div class="b" style="left:28px;top:390px;width:496px;height:1px;background:#000;"></div>
<div class="b" style="left:28px;top:411px;width:496px;height:1px;background:#000;"></div>
<div class="b" style="left:28px;top:432px;width:496px;height:1px;background:#000;"></div>
<div class="b" style="left:28px;top:222px;width:1px;height:211px;background:#000;"></div>
<div class="b" style="left:285px;top:222px;width:1px;height:211px;background:#000;"></div>
<div class="b" style="left:404px;top:222px;width:1px;height:211px;background:#000;"></div>
<div class="b" style="left:523px;top:222px;width:1px;height:211px;background:#000;"></div>
<span class="t" style="left:30.90px;top:228px;font-size:13.5px;color:#000;letter-spacing:0.496px;font-weight:bold;-webkit-text-stroke:0;">Наименование</span>
<span class="t" style="left:299.20px;top:228px;font-size:13.5px;color:#000;letter-spacing:0.505px;font-weight:bold;-webkit-text-stroke:0;">Продано, шт.</span>
<span class="t" style="left:416.00px;top:228px;font-size:13.5px;color:#000;letter-spacing:0.298px;font-weight:bold;-webkit-text-stroke:0;">Выручка, руб.</span>
<span class="t" style="left:30.90px;top:248px;font-size:14px;color:#000;letter-spacing:0.437px;">Кроссовки беговые</span>
<span class="t" style="left:378.30px;top:248px;font-size:14px;color:#000;letter-spacing:0.114px;">246</span>
<span class="t" style="left:469.60px;top:248px;font-size:14px;color:#000;letter-spacing:0.084px;">981 540</span>
<span class="t" style="left:30.90px;top:269px;font-size:14px;color:#000;letter-spacing:0.329px;">Кроссовки для баскетбола</span>
<span class="t" style="left:378.30px;top:269px;font-size:14px;color:#000;letter-spacing:0.114px;">140</span>
<span class="t" style="left:469.60px;top:269px;font-size:14px;color:#000;letter-spacing:0.084px;">698 600</span>
<span class="t" style="left:30.90px;top:290px;font-size:14px;color:#000;letter-spacing:0.486px;">Кроссовки теннисные</span>
<span class="t" style="left:386.20px;top:290px;font-size:14px;color:#000;letter-spacing:0.111px;">64</span>
<span class="t" style="left:477.50px;top:290px;font-size:14px;color:#000;letter-spacing:0.079px;">28 736</span>
<span class="t" style="left:30.90px;top:311px;font-size:14px;color:#000;letter-spacing:0.481px;">Кеды</span>
<span class="t" style="left:378.30px;top:311px;font-size:14px;color:#000;letter-spacing:0.114px;">199</span>
<span class="t" style="left:469.60px;top:311px;font-size:14px;color:#000;letter-spacing:0.084px;">794 010</span>
<span class="t" style="left:30.90px;top:332px;font-size:14px;color:#000;letter-spacing:0.666px;">Ботинки зимние</span>
<span class="t" style="left:378.30px;top:332px;font-size:14px;color:#000;letter-spacing:0.114px;">120</span>
<span class="t" style="left:469.60px;top:332px;font-size:14px;color:#000;letter-spacing:0.084px;">958 800</span>
<span class="t" style="left:30.90px;top:353px;font-size:14px;color:#000;letter-spacing:0.546px;">Ботинки зимние утепленные</span>
<span class="t" style="left:386.20px;top:353px;font-size:14px;color:#000;letter-spacing:0.111px;">86</span>
<span class="t" style="left:469.60px;top:353px;font-size:14px;color:#000;letter-spacing:0.084px;">773 140</span>
<span class="t" style="left:30.90px;top:374px;font-size:14px;color:#000;letter-spacing:0.386px;">Носки спортивные</span>
<span class="t" style="left:378.30px;top:374px;font-size:14px;color:#000;letter-spacing:0.114px;">674</span>
<span class="t" style="left:469.60px;top:374px;font-size:14px;color:#000;letter-spacing:0.084px;">195 460</span>
<span class="t" style="left:30.90px;top:395px;font-size:14px;color:#000;letter-spacing:0.371px;">Перчатки спортивные</span>
<span class="t" style="left:378.30px;top:395px;font-size:14px;color:#000;letter-spacing:0.114px;">245</span>
<span class="t" style="left:469.60px;top:395px;font-size:14px;color:#000;letter-spacing:0.084px;">193 550</span>
<span class="t" style="left:30.90px;top:416px;font-size:14px;color:#000;letter-spacing:0.246px;">Бейсболка</span>
<span class="t" style="left:378.30px;top:416px;font-size:14px;color:#000;letter-spacing:0.114px;">172</span>
<span class="t" style="left:469.60px;top:416px;font-size:14px;color:#000;letter-spacing:0.084px;">170 280</span>
<svg class="b" style="left:0;top:200px" width="540" height="240" viewBox="0 200 540 240"><path d="M28 223.25L524 223.25" stroke="#fff" stroke-width="1.5"/><path d="M28 223.25L524 223.25" stroke="#0d7a3e" stroke-width="1.5" stroke-dasharray="7 2" stroke-dashoffset="2.2"/><path d="M28.45 222.5L28.45 433" stroke="#fff" stroke-width="1.5"/><path d="M28.45 222.5L28.45 433" stroke="#0d7a3e" stroke-width="1.5" stroke-dasharray="7 2" stroke-dashoffset="6.1"/><path d="M28 432L524 432" stroke="#fff" stroke-width="2"/><path d="M28 432L524 432" stroke="#0d7a3e" stroke-width="2" stroke-dasharray="7 2" stroke-dashoffset="7.1"/><path d="M522.9 222.5L522.9 433" stroke="#fff" stroke-width="2.2"/><path d="M522.9 222.5L522.9 433" stroke="#0d7a3e" stroke-width="2.2" stroke-dasharray="7 2" stroke-dashoffset="1.1"/></svg>
<svg class="b" style="left:20px;top:214px;" width="512" height="226" viewBox="0 0 512 226"><rect x="3.5" y="3.5" width="502" height="216.7" rx="3.5" fill="none" stroke="#ff0000" stroke-width="3"/></svg>
<!-- sheet tabs, scrollbars, status bar -->
<div class="b" style="left:1100px;top:201px;width:16px;height:357px;background:#e9e9e9;"></div>
<div class="b" style="left:1101px;top:204.5px;width:14px;height:14px;background:#fff;border:1px solid #ababab;box-sizing:border-box;"></div>
<svg class="b" style="left:1104px;top:208.5px;" width="8" height="6" viewBox="0 0 8 6"><path d="M0.5 5L4 1l3.5 4z" fill="#555"/></svg>
<div class="b" style="left:1101px;top:218.5px;width:14px;height:243.5px;background:#fff;border:1px solid #ababab;box-sizing:border-box;"></div>
<div class="b" style="left:1101px;top:462px;width:14px;height:82px;background:#d2d2d2;"></div>
<div class="b" style="left:1101px;top:543.5px;width:14px;height:14px;background:#fff;border:1px solid #ababab;box-sizing:border-box;"></div>
<svg class="b" style="left:1104px;top:547.5px;" width="8" height="6" viewBox="0 0 8 6"><path d="M0.5 1L4 5l3.5-4z" fill="#555"/></svg>
<div class="b" style="left:1px;top:557px;width:1115px;height:29px;background:#e6e6e6;"></div>
<div class="b" style="left:1px;top:557px;width:1098px;height:1px;background:#a8a8a8;"></div>
<div class="b" style="left:1097px;top:201px;width:1.4px;height:357px;background:#a8a8a8;"></div>
<svg class="b" style="left:24px;top:566px;" width="8" height="9" viewBox="0 0 8 9"><path d="M6 0.8L1.5 4.5 6 8.2z" fill="#c3c3c3"/></svg>
<svg class="b" style="left:52px;top:566px;" width="8" height="9" viewBox="0 0 8 9"><path d="M2 0.8L6.5 4.5 2 8.2z" fill="#c3c3c3"/></svg>
<div class="b" style="left:99px;top:561px;width:1px;height:20px;background:#bdbdbd;"></div>
<span class="t" style="left:114.50px;top:564px;font-size:13.5px;color:#444;letter-spacing:-0.314px;">microexcel.ru</span>
<div class="b" style="left:207px;top:558px;width:88.5px;height:25px;background:#fff;"></div>
<div class="b" style="left:207px;top:579.4px;width:88.5px;height:2px;background:#15703f;"></div>
<div class="b" style="left:296px;top:561px;width:1px;height:20px;background:#bdbdbd;"></div>
<span class="t" style="left:218.30px;top:564px;font-size:13.5px;color:#15703f;letter-spacing:-0.712px;font-weight:bold;-webkit-text-stroke:0;">Магазин_1</span>
<span class="t" style="left:307.80px;top:564px;font-size:13.5px;color:#444;letter-spacing:-0.433px;">Магазин_2</span>
<div class="b" style="left:384px;top:561px;width:1px;height:20px;background:#bdbdbd;"></div>
<span class="t" style="left:397.00px;top:564px;font-size:13.5px;color:#444;letter-spacing:-0.499px;">Магазин_3</span>
<div class="b" style="left:472.5px;top:561px;width:1px;height:20px;background:#bdbdbd;"></div>
<svg class="b" style="left:504.5px;top:562.5px;" width="18" height="18" viewBox="0 0 18 18"><circle cx="9" cy="9" r="7.4" fill="none" stroke="#777" stroke-width="1.2"/><path d="M9 5v8M5 9h8" stroke="#777" stroke-width="1.2"/></svg>
<div class="b" style="left:671.5px;top:566.5px;width:1.6px;height:1.6px;background:#8c8c8c;"></div>
<div class="b" style="left:671.5px;top:570px;width:1.6px;height:1.6px;background:#8c8c8c;"></div>
<div class="b" style="left:671.5px;top:573.5px;width:1.6px;height:1.6px;background:#8c8c8c;"></div>
<div class="b" style="left:688px;top:564px;width:410px;height:15px;background:#d2d2d2;"></div>
<div class="b" style="left:688px;top:564px;width:15.5px;height:15px;background:#fff;border:1px solid #ababab;box-sizing:border-box;"></div>
<svg class="b" style="left:693px;top:568px;" width="6" height="8" viewBox="0 0 6 8"><path d="M5 0.5L1 4l4 3.5z" fill="#555"/></svg>
<div class="b" style="left:703px;top:564px;width:342px;height:15px;background:#fff;border:1px solid #ababab;box-sizing:border-box;"></div>
<div class="b" style="left:1083.5px;top:564px;width:14.5px;height:15px;background:#fff;border:1px solid #ababab;box-sizing:border-box;"></div>
<svg class="b" style="left:1088px;top:568px;" width="6" height="8" viewBox="0 0 6 8"><path d="M1 0.5l4 3.5-4 3.5z" fill="#555"/></svg>
<div class="b" style="left:1px;top:585px;width:1115px;height:20px;background:#f3f3f3;"></div>
<span class="t" style="left:7.20px;top:590px;font-size:12px;color:#333;letter-spacing:-0.235px;">Укажите</span>
<svg class="b" style="left:71px;top:589px;" width="14" height="13" viewBox="0 0 14 13"><rect x="1.5" y="2.5" width="11" height="9.5" fill="none" stroke="#555"/><rect x="0.5" y="0.5" width="5" height="4" fill="#555"/><path d="M4 6.5h7M4 8.5h7M4 10.5h7" stroke="#777" stroke-dasharray="1 1"/></svg>
<svg class="b" style="left:818px;top:589px;" width="14" height="13" viewBox="0 0 14 13"><rect x="0.5" y="0.5" width="12.5" height="11.5" fill="none" stroke="#555"/><path d="M0.5 4.3h12.5M0.5 8.2h12.5M4.7 0.5v11.5M8.9 0.5v11.5" stroke="#555"/></svg>
<svg class="b" style="left:857.5px;top:589px;" width="15" height="13" viewBox="0 0 15 13"><rect x="0.5" y="0.5" width="13" height="11.5" fill="none" stroke="#555"/><rect x="3.5" y="3" width="7" height="7" fill="none" stroke="#555"/><path d="M5 5h4M5 7h4" stroke="#555"/></svg>
<svg class="b" style="left:898px;top:589px;" width="15" height="13" viewBox="0 0 15 13"><path d="M0.5 0.5h13v11.5h-13z" fill="none" stroke="#555"/><path d="M5 0.5v6.5h5v-6.5" fill="none" stroke="#555"/></svg>
<div class="b" style="left:931px;top:595.5px;width:8px;height:1px;background:#8a8a8a;"></div>
<div class="b" style="left:944px;top:596px;width:100px;height:1px;background:#b5b5b5;"></div>
<div class="b" style="left:993.5px;top:593px;width:1.5px;height:7px;background:#b5b5b5;"></div>
<div class="b" style="left:1048.5px;top:595.5px;width:8px;height:1px;background:#8a8a8a;"></div>
<div class="b" style="left:1052px;top:592px;width:1px;height:8px;background:#8a8a8a;"></div>
<span class="t" style="left:1070.50px;top:590px;font-size:12px;color:#b3b3b3;letter-spacing:-0.906px;">100 %</span>
<svg class="b" style="left:200px;top:552px;" width="106" height="36" viewBox="0 0 106 36"><rect x="4.9" y="4.7" width="94.5" height="26.2" rx="4.5" fill="none" stroke="#ff0000" stroke-width="3"/></svg>
<!-- consolidate dialog -->
<div class="b" style="left:537px;top:77px;width:536px;height:299.5px;background:#f0f0f0;border:1px solid #56464c;box-sizing:border-box;box-shadow:0 6px 16px 1px rgba(0,0,0,0.27);"></div>
<div class="b" style="left:538px;top:78px;width:534px;height:30px;background:#fff;"></div>
<span class="t" style="left:546.50px;top:87px;font-size:12px;color:#000;letter-spacing:-0.108px;">Консолидация</span>
<span class="t" style="left:1000.50px;top:86px;font-size:13.5px;color:#000;">?</span>
<svg class="b" style="left:1042px;top:86px;" width="14" height="14" viewBox="0 0 14 14"><path d="M1.5 1.5l10.5 10.5M12 1.5L1.5 12" stroke="#000" stroke-width="1.1" fill="none"/></svg>
<span class="t" style="left:544.00px;top:116px;font-size:12px;color:#000;letter-spacing:-0.478px;"><u>Ф</u>ункция:</span>
<div class="b" style="left:544px;top:131px;width:174px;height:21.5px;background:#fff;border:1px solid #adadad;box-sizing:border-box;"></div>
<div class="b" style="left:700.5px;top:132px;width:16.5px;height:19.5px;background:#e1e1e1;border:1px solid #adadad;box-sizing:border-box;"></div>
<svg class="b" style="left:704px;top:138px;" width="10" height="7" viewBox="0 0 10 7"><path d="M1 1l4 4 4-4" fill="none" stroke="#333" stroke-width="1.1"/></svg>
<span class="t" style="left:548.50px;top:136px;font-size:12px;color:#000;letter-spacing:-0.144px;">Сумма</span>
<span class="t" style="left:544.00px;top:158px;font-size:12px;color:#000;letter-spacing:-0.890px;">Сс<u>ы</u>лка:</span>
<div class="b" style="left:544px;top:173px;width:438px;height:20px;background:#fff;border:1px solid #8a8a8a;box-sizing:border-box;"></div>
<span class="t" style="left:548.50px;top:178px;font-size:12px;color:#000;letter-spacing:-0.443px;">&#x27;[Консолидация данных_v2.xlsx]</span>
<span class="t" style="left:715.60px;top:178px;font-size:12px;color:#000;letter-spacing:-0.609px;">Магазин_1&#x27;!$A$1:$C$10</span>
<div class="b" style="left:960px;top:173px;width:22px;height:20px;background:#fff;border:2px solid #b9b9b9;box-sizing:border-box;"></div>
<svg class="b" style="left:965px;top:176px;" width="12" height="14" viewBox="0 0 12 14"><path d="M6 10.2V3.2M2.6 6.2L6 2.6l3.4 3.6" fill="none" stroke="#000" stroke-width="1.8"/><path d="M2 11.6h8" stroke="#000" stroke-width="1.5"/></svg>
<div class="b" style="left:991px;top:172px;width:74px;height:22px;background:#e1e1e1;border:1px solid #adadad;box-sizing:border-box;"></div>
<span class="t" style="left:1006.00px;top:177px;font-size:12px;color:#000;letter-spacing:-0.134px;">Об<u>з</u>ор...</span>
<span class="t" style="left:544.00px;top:199px;font-size:12px;color:#000;letter-spacing:-0.180px;"><u>С</u>писок диапазонов:</span>
<div class="b" style="left:544px;top:214px;width:438px;height:55.5px;background:#fff;border:1px solid #828282;box-sizing:border-box;"></div>
<div class="b" style="left:964px;top:215px;width:17px;height:53.5px;background:#f0f0f0;"></div>
<svg class="b" style="left:966.5px;top:221px;" width="10" height="7" viewBox="0 0 10 7"><path d="M1 5.5l4-4 4 4" fill="none" stroke="#c4c4c4" stroke-width="1.3"/></svg>
<svg class="b" style="left:966.5px;top:255.5px;" width="10" height="7" viewBox="0 0 10 7"><path d="M1 1.5l4 4 4-4" fill="none" stroke="#c4c4c4" stroke-width="1.3"/></svg>
<div class="b" style="left:991px;top:214px;width:74px;height:21.5px;background:#e1e1e1;border:1px solid #adadad;box-sizing:border-box;"></div>
<span class="t" style="left:1002.00px;top:219px;font-size:12px;color:#000;letter-spacing:-0.131px;">Доб<u>а</u>вить</span>
<div class="b" style="left:991px;top:244px;width:74px;height:21.5px;background:#e1e1e1;border:1px solid #adadad;box-sizing:border-box;"></div>
<span class="t" style="left:1007.00px;top:249px;font-size:12px;color:#000;letter-spacing:-0.547px;"><u>У</u>далить</span>
<div class="b" style="left:544px;top:279px;width:199px;height:54px;border:1px dotted #d0d0d0;box-sizing:border-box;"></div>
<div class="b" style="left:548px;top:274px;width:168px;height:12px;background:#f0f0f0;"></div>
<span class="t" style="left:550.50px;top:274px;font-size:12px;color:#000;letter-spacing:-0.272px;">Использовать в качестве имен</span>
<div class="b" style="left:553px;top:294px;width:13px;height:13px;background:#fff;border:1px solid #333;box-sizing:border-box;"></div>
<span class="t" style="left:570.30px;top:295px;font-size:12px;color:#000;letter-spacing:-0.107px;">подписи <u>в</u>ерхней строки</span>
<div class="b" style="left:553px;top:313px;width:13px;height:13px;background:#fff;border:1px solid #333;box-sizing:border-box;"></div>
<span class="t" style="left:570.30px;top:314px;font-size:12px;color:#000;letter-spacing:-0.167px;">значения <u>л</u>евого столбца</span>
<div class="b" style="left:753px;top:313px;width:13px;height:13px;background:#fff;border:1px solid #333;box-sizing:border-box;"></div>
<span class="t" style="left:770.50px;top:314px;font-size:12px;color:#000;letter-spacing:-0.371px;">Создавать связи с и<u>с</u>ходными данными</span>
<div class="b" style="left:907px;top:346px;width:74px;height:22px;background:#e1e1e1;border:2px solid #0078d7;box-sizing:border-box;"></div>
<span class="t" style="left:936.50px;top:352px;font-size:12px;color:#000;letter-spacing:-1.172px;">OK</span>
<div class="b" style="left:991px;top:346px;width:74px;height:22px;background:#e1e1e1;border:1px solid #adadad;box-sizing:border-box;"></div>
<span class="t" style="left:1006.00px;top:352px;font-size:12px;color:#000;letter-spacing:-0.317px;">Закрыть</span>
<!-- annotations -->
<svg class="b" style="left:455px;top:1px;" width="162" height="32" viewBox="0 0 162 32"><rect x="5.3" y="5" width="150" height="22" rx="4" fill="none" stroke="#ff0000" stroke-width="3"/></svg>
<svg class="b" style="left:540px;top:170px;" width="180" height="28" viewBox="0 0 180 28"><rect x="4.4" y="5.4" width="170.6" height="19" rx="4" fill="none" stroke="#ff0000" stroke-width="3"/></svg>
<svg class="b" style="left:0;top:0" width="1117" height="606" viewBox="0 0 1117 606"><polygon points="537.2,28.6 592.9,138.0 598.4,124.0 607.2,172.8 572.9,137.0 587.5,140.7 531.8,31.4" fill="#ff0000"/></svg>
<div class="b" style="left:0px;top:0px;width:1px;height:606px;background:#007641;"></div>
<div class="b" style="left:1116px;top:0px;width:1px;height:606px;background:#007641;"></div>
<div class="b" style="left:0px;top:605px;width:1117px;height:1px;background:#007641;"></div>
</body></html>
